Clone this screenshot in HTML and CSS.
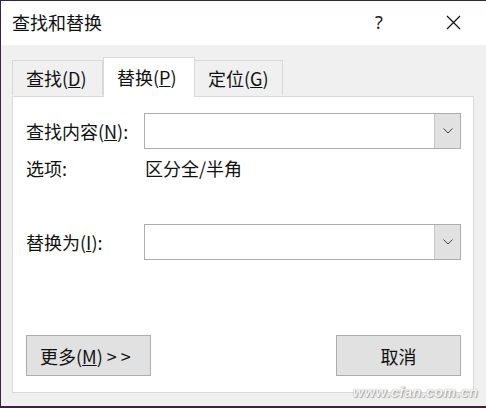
FILE: index.html
```html
<!DOCTYPE html>
<html>
<head>
    <meta charset="utf-8">
    <title>查找和替换</title>
    <link rel="stylesheet" href="styles.css">
</head>
<body>
    <div class="window">
        <div class="titlebar">
            <span class="title">查找和替换</span>
            <span class="help">?</span>
            <span class="close">
                <svg width="15" height="15" viewBox="0 0 15 15">
                    <path d="M1 1 L14 14 M14 1 L1 14" stroke="#111" stroke-width="1.2" fill="none"/>
                </svg>
            </span>
        </div>

        <div class="content">
            <div class="tabs">
                <div class="tab">查找(<u>D</u>)</div>
                <div class="tab active">替换(<u>P</u>)</div>
                <div class="tab">定位(<u>G</u>)</div>
            </div>

            <div class="panel">
                <div class="row first">
                    <label class="label">查找内容(<u>N</u>):</label>
                    <div class="combo">
                        <div class="combo-field"></div>
                        <div class="combo-btn">
                            <svg width="10" height="6" viewBox="0 0 10 6">
                                <path d="M0.5 0.5 L5 5 L9.5 0.5" stroke="#444" stroke-width="1" fill="none"/>
                            </svg>
                        </div>
                    </div>
                </div>

                <div class="row options">
                    <span class="label">选项:</span>
                    <span class="value">区分全/半角</span>
                </div>

                <div class="row replace">
                    <label class="label">替换为(<u>I</u>):</label>
                    <div class="combo">
                        <div class="combo-field"></div>
                        <div class="combo-btn">
                            <svg width="10" height="6" viewBox="0 0 10 6">
                                <path d="M0.5 0.5 L5 5 L9.5 0.5" stroke="#444" stroke-width="1" fill="none"/>
                            </svg>
                        </div>
                    </div>
                </div>

                <div class="buttons">
                    <button class="btn">更多(<u>M</u>) &gt; &gt;</button>
                    <button class="btn">取消</button>
                </div>
            </div>
        </div>

        <div class="watermark">www.cfan.com.cn</div>
    </div>
</body>
</html>
```

FILE: styles.css
```css
body {
    margin: 0;
    padding: 0;
    font-family: "Noto Sans CJK SC", "Noto Sans", sans-serif;
    color: #111;
    overflow: hidden;
}
.window {
    position: relative;
    width: 486px;
    height: 408px;
    box-sizing: border-box;
    background-color: #f0f0f0;
    border-top: 1px solid #3d203d;
    border-left: 1px solid #3d203d;
    border-bottom: 2px solid #3d203d;
}
.titlebar {
    height: 44px;
    background: white;
    display: flex;
    align-items: center;
    padding-left: 11px;
    font-size: 18px;
}
.title {
    flex: 1;
    margin-top: -2px;
}
.help {
    width: 20px;
    color: #222;
    font-family: "Noto Sans", sans-serif;
    font-size: 18px;
    margin-right: 51px;
    margin-top: -2px;
}
.close {
    display: flex;
    width: 15px;
    height: 15px;
    margin-right: 25px;
    margin-top: -1px;
}
.content {
    padding: 12px 12px 0 11px;
}
.tabs {
    display: flex;
    align-items: flex-end;
    font-size: 18px;
    position: relative;
    z-index: 1;
}
.tab {
    height: 35px;
    line-height: 34px;
    padding: 0 13px;
    background: #f0f0f0;
    border: 1px solid #d9d9d9;
    border-bottom: none;
    box-sizing: border-box;
    margin-bottom: 1px;
}
.tab:first-child {
    width: 91px;
}
.tab + .tab {
    border-left: none;
}
.tab.active {
    height: 40px;
    width: 92px;
    background: white;
    margin-bottom: -1px;
    padding-top: 1px;
    line-height: 36px;
    border-left: 1px solid #d9d9d9;
}
.tab.active + .tab {
    width: 88px;
    border-left: none;
}
.panel {
    height: 297px;
    box-sizing: border-box;
    background: white;
    border: 1px solid #d9d9d9;
    padding: 16px 12px 16px 13px;
    display: flex;
    flex-direction: column;
    font-size: 18px;
}
.row {
    display: flex;
    align-items: center;
}
.label {
    width: 118px;
}
.combo {
    display: flex;
    width: 317px;
    height: 36px;
    box-sizing: border-box;
    border: 1px solid #adadad;
}
.combo-field {
    flex: 1;
    background: white;
}
.combo-btn {
    width: 25px;
    background: #e1e1e1;
    border-left: 1px solid #c6c6c6;
    display: flex;
    align-items: center;
    justify-content: center;
}
.options {
    margin-top: 6px;
    height: 26px;
}
.value {
    margin-left: 1px;
}
.replace {
    margin-top: 43px;
}
.buttons {
    margin-top: auto;
    display: flex;
    justify-content: space-between;
}
.btn {
    width: 125px;
    height: 41px;
    background: #e1e1e1;
    border: 1px solid #adadad;
    font-family: inherit;
    font-size: 18px;
    color: #111;
    padding: 0;
}
.btn:first-child {
    text-align: left;
    padding-left: 13px;
}
.watermark {
    position: absolute;
    right: 8px;
    bottom: 6px;
    font-family: "Liberation Sans", sans-serif;
    font-size: 14px;
    font-weight: bold;
    font-style: italic;
    letter-spacing: 0.5px;
    color: #f4f4f4;
    text-shadow: 0 0 1px #999, 1px 1px 1px #aaa;
}
```
